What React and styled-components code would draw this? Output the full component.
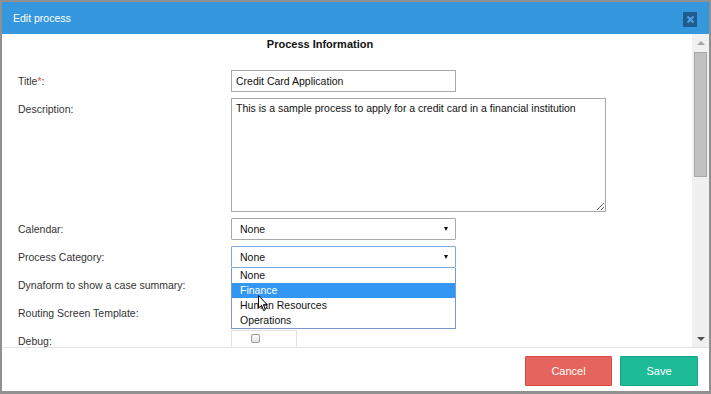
import React from 'react';
import styled, { createGlobalStyle } from 'styled-components';

const GlobalStyle = createGlobalStyle`
  html, body {
    margin: 0;
    padding: 0;
    background: #909090;
    font-family: "Liberation Sans", Arial, sans-serif;
  }
`

const Page = styled.div`
  width: 711px;
  height: 394px;
  padding: 2px 2px 3px 2px;
  box-sizing: border-box;
`
const Dialog = styled.div`
  width: 707px;
  height: 389px;
  background: #fff;
  display: flex;
  flex-direction: column;
`
const Header = styled.div`
  height: 32px;
  flex: none;
  background: #3597de;
  display: flex;
  align-items: center;
  justify-content: space-between;
  padding: 0 12px 0 11px;
`
const HeaderTitle = styled.span`
  color: #fff;
  font-size: 10.5px;
`
const CloseBtn = styled.span`
  width: 14px;
  height: 15px;
  margin-top: 2px;
  background: #1f5b8c;
  border-radius: 1px;
  display: flex;
  align-items: center;
  justify-content: center;
`
const BodyArea = styled.div`
  height: 313px;
  flex: none;
  display: flex;
  border-bottom: 1px solid #e3e3e3;
`
const Scroller = styled.div`
  flex: 1;
  overflow: hidden;
  padding-top: 2px;
`
const Heading = styled.div`
  width: 636px;
  text-align: center;
  font-weight: bold;
  font-size: 11px;
  line-height: 16px;
  color: #111;
  margin-bottom: 18px;
`
const Form = styled.div`
  display: flex;
  flex-direction: column;
  gap: 6px;
  padding-left: 16px;
`
const Row = styled.div`
  display: grid;
  grid-template-columns: 213px 1fr;
  align-items: ${(p) => (p.top ? 'start' : 'center')};
  min-height: 22px;
`
const Label = styled.label`
  font-size: 10.5px;
  line-height: 13px;
  color: #333;
  padding-top: ${(p) => (p.top ? '5px' : '0')};
`
const Req = styled.span`
  color: #e74c3c;
`
const TextInput = styled.input`
  width: 225px;
  height: 22px;
  box-sizing: border-box;
  border: 1px solid #a9a9a9;
  padding: 0 4px;
  font-family: inherit;
  font-size: 10.5px;
  color: #111;
  outline: none;
  margin: 0;
`
const TextArea = styled.textarea`
  width: 375px;
  height: 114px;
  box-sizing: border-box;
  border: 1px solid #a9a9a9;
  padding: 3px 4px;
  font-family: inherit;
  font-size: 10.5px;
  line-height: 13px;
  color: #111;
  outline: none;
  margin: 0;
  display: block;
`
const SelectWrap = styled.div`
  position: relative;
  width: 225px;
`
const SelectBox = styled.div`
  height: 22px;
  box-sizing: border-box;
  border: 1px solid ${(p) => (p.focused ? '#7fa9e0' : '#a9a9a9')};
  border-radius: 1px;
  padding: 0 8px;
  display: flex;
  align-items: center;
  justify-content: space-between;
  font-size: 10.5px;
  color: #111;
  &::after {
    content: '';
    border-left: 2.5px solid transparent;
    border-right: 2.5px solid transparent;
    border-top: 4px solid #111;
    margin-right: -1px;
  }
`
const DropList = styled.ul`
  position: absolute;
  top: 100%;
  left: 0;
  width: 225px;
  box-sizing: border-box;
  margin: 0;
  padding: 0;
  list-style: none;
  background: #fff;
  border: 1px solid #7a98c9;
  border-top: none;
  z-index: 2;
`
const DropItem = styled.li`
  height: 15px;
  line-height: 15px;
  padding-left: 8px;
  font-size: 10.5px;
  color: ${(p) => (p.active ? '#fff' : '#111')};
  background: ${(p) => (p.active ? '#3297f2' : 'transparent')};
`
const Cursor = styled.svg`
  position: absolute;
  left: 26px;
  top: 27px;
`
const CheckHolder = styled.div`
  width: 66px;
  height: 22px;
  box-sizing: border-box;
  border: 1px solid #e2e2e2;
  padding: 3px 0 0 19px;
`
const CheckBox = styled.span`
  display: block;
  width: 7px;
  height: 7px;
  border: 1px solid #9a9a9a;
  border-radius: 2px;
  background: linear-gradient(#fdfdfd, #e3e3e3);
`
const Scrollbar = styled.div`
  width: 17px;
  flex: none;
  background: #f0f0f0;
  display: flex;
  flex-direction: column;
`
const Arrow = styled.div`
  height: 17px;
  display: flex;
  align-items: center;
  justify-content: center;
  &::before {
    content: '';
    border-left: 4px solid transparent;
    border-right: 4px solid transparent;
    ${(p) =>
      p.down
        ? 'border-top: 4px solid #505050;'
        : 'border-bottom: 4px solid #a3a3a3;'}
  }
`
const Thumb = styled.div`
  margin: 1px 0 0 2px;
  width: 13px;
  height: 125px;
  box-sizing: border-box;
  background: #c1c1c1;
  border: 1px solid #a8a8a8;
`
const Spacer = styled.div`
  flex: 1;
`
const Footer = styled.div`
  flex: 1;
  display: flex;
  justify-content: flex-end;
  align-items: flex-start;
  gap: 8px;
  padding: 8px 11px 0 0;
`
const Button = styled.button`
  width: ${(p) => p.w}px;
  height: 30px;
  border: 1px solid ${(p) => (p.danger ? '#d9483f' : '#17a587')};
  background: ${(p) => (p.danger ? '#e5645d' : '#1dbb98')};
  color: #fff;
  font-family: inherit;
  font-size: 11px;
  border-radius: 1px;
  padding: 0;
`

const options = ['None', 'Finance', 'Human Resources', 'Operations']

const App = () => {
  return (
    <Page>
      <GlobalStyle />
      <Dialog>
        <Header>
          <HeaderTitle>Edit process</HeaderTitle>
          <CloseBtn>
            <svg width="9" height="9" viewBox="0 0 9 9">
              <path d="M1.5 1.5 L7.5 7.5 M7.5 1.5 L1.5 7.5" stroke="#4d9fe3" strokeWidth="2.2" />
            </svg>
          </CloseBtn>
        </Header>

        <BodyArea>
          <Scroller>
            <Heading>Process Information</Heading>
            <Form>
              <Row>
                <Label>Title<Req>*</Req>:</Label>
                <TextInput readOnly value="Credit Card Application" />
              </Row>
              <Row top>
                <Label top>Description:</Label>
                <TextArea
                  readOnly
                  value="This is a sample process to apply for a credit card in a financial institution"
                />
              </Row>
              <Row>
                <Label>Calendar:</Label>
                <SelectWrap>
                  <SelectBox>None</SelectBox>
                </SelectWrap>
              </Row>
              <Row>
                <Label>Process Category:</Label>
                <SelectWrap>
                  <SelectBox focused>None</SelectBox>
                  <DropList>
                    {options.map((o) => (
                      <DropItem key={o} active={o === 'Finance'}>{o}</DropItem>
                    ))}
                    <Cursor width="10" height="17" viewBox="0 0 10 17">
                      <path
                        d="M0.5 0.5 L0.5 13 L3.5 10.3 L5.6 15.6 L7.4 14.8 L5.4 9.7 L9.2 9.7 Z"
                        fill="#fff"
                        stroke="#000"
                        strokeWidth="1"
                      />
                    </Cursor>
                  </DropList>
                </SelectWrap>
              </Row>
              <Row>
                <Label>Dynaform to show a case summary:</Label>
                <span />
              </Row>
              <Row>
                <Label>Routing Screen Template:</Label>
                <span />
              </Row>
              <Row>
                <Label>Debug:</Label>
                <CheckHolder>
                  <CheckBox />
                </CheckHolder>
              </Row>
            </Form>
          </Scroller>
          <Scrollbar>
            <Arrow />
            <Thumb />
            <Spacer />
            <Arrow down />
          </Scrollbar>
        </BodyArea>

        <Footer>
          <Button danger w={87}>Cancel</Button>
          <Button w={78}>Save</Button>
        </Footer>
      </Dialog>
    </Page>
  );
};

export default App;
